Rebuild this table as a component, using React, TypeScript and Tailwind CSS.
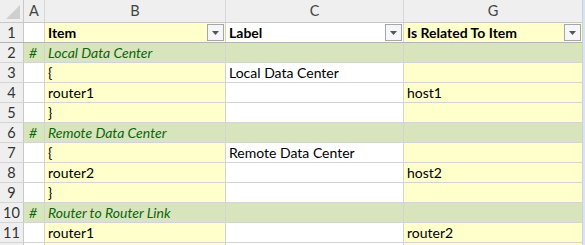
import React from 'react';

type Kind = 'group' | 'data';

type Row = {
  n: number | null;
  kind: Kind;
  a?: string;
  b?: string;
  c?: string;
  g?: string;
};

const rows: Row[] = [
  { n: 2, kind: 'group', a: '#', b: 'Local Data Center' },
  { n: 3, kind: 'data', b: '{', c: 'Local Data Center' },
  { n: 4, kind: 'data', b: 'router1', g: 'host1' },
  { n: 5, kind: 'data', b: '}' },
  { n: 6, kind: 'group', a: '#', b: 'Remote Data Center' },
  { n: 7, kind: 'data', b: '{', c: 'Remote Data Center' },
  { n: 8, kind: 'data', b: 'router2', g: 'host2' },
  { n: 9, kind: 'data', b: '}' },
  { n: 10, kind: 'group', a: '#', b: 'Router to Router Link' },
  { n: 11, kind: 'data', b: 'router1', g: 'router2' },
  // row 12 only peeks in at the bottom edge
  { n: null, kind: 'data' },
];

const FilterButton = () => (
  <div className="absolute right-[1px] top-[1px] w-[17px] h-[17px] border border-[#a6a6a6] bg-[#f4f6f9] flex items-center justify-center">
    <svg width="7" height="4" viewBox="0 0 7 4">
      <path d="M0 0 L7 0 L3.5 4 Z" fill="#555" />
    </svg>
  </div>
);

const App: React.FC = () => {
  return (
    <div
      className="w-[585px] h-[245px] overflow-hidden bg-white flex text-[14px] text-black"
      style={{ fontFamily: 'Lato, "Liberation Sans", sans-serif' }}
    >
      <div className="w-[582px] flex flex-col shrink-0">
        {/* column letters */}
        <div className="flex h-[23px] shrink-0 bg-[#efefef] text-[#444] text-[14.5px] border-b border-[#c8c8c8]">
          <div className="w-[24px] border-r border-[#c8c8c8] relative">
            <svg className="absolute right-[3px] bottom-[3px]" width="14" height="14" viewBox="0 0 14 14">
              <path d="M14 0 L14 14 L0 14 Z" fill="#cfcfcf" />
            </svg>
          </div>
          <div className="w-[21px] border-r border-[#d8d8d8] flex items-center justify-center">A</div>
          <div className="w-[181px] border-r border-[#d8d8d8] flex items-center justify-center">B</div>
          <div className="w-[178px] border-r border-[#d8d8d8] flex items-center justify-center">C</div>
          <div className="flex-1 flex items-center justify-center">G</div>
        </div>

        {/* table header row */}
        <div className="flex h-[20px] shrink-0 border-b border-[#b4b4b4]">
          <div className="w-[24px] bg-[#efefef] border-r border-[#c8c8c8] text-[#333] text-[14.5px] flex items-center justify-center">1</div>
          <div className="w-[21px] border-r border-[#d4d4d4] bg-white" />
          <div className="w-[181px] border-r border-[#d4d4d4] bg-[#ffffcc] relative pl-[3px] font-bold leading-[20px]">
            Item
            <FilterButton />
          </div>
          <div className="w-[178px] border-r border-[#d4d4d4] bg-white relative pl-[3px] font-bold leading-[20px]">
            Label
            <FilterButton />
          </div>
          <div className="flex-1 bg-[#ffffcc] relative pl-[3px] font-bold leading-[20px]">
            Is Related To Item
            <FilterButton />
          </div>
        </div>

        {rows.map((r, i) => {
          const group = r.kind === 'group';
          return (
            <div key={i} className="flex h-[20px] shrink-0 border-b border-[#d4d4d4]">
              <div className="w-[24px] bg-[#efefef] border-r border-[#c8c8c8] text-[#333] text-[14.5px] flex items-center justify-center">
                {r.n}
              </div>
              <div
                className={`w-[21px] border-r border-[#d4d4d4] pl-[5px] leading-[20px] ${
                  group ? 'bg-[#d8e4bc] text-[#0f650f] italic' : 'bg-white'
                }`}
              >
                {r.a}
              </div>
              <div
                className={`w-[181px] border-r border-[#d4d4d4] pl-[3px] leading-[20px] whitespace-nowrap ${
                  group ? 'bg-[#d8e4bc] text-[#0f650f] italic' : 'bg-[#ffffcc]'
                }`}
              >
                {r.b}
              </div>
              <div
                className={`w-[178px] border-r border-[#d4d4d4] pl-[3px] leading-[20px] whitespace-nowrap ${
                  group ? 'bg-[#d8e4bc]' : 'bg-white'
                }`}
              >
                {r.c}
              </div>
              <div
                className={`flex-1 pl-[3px] leading-[20px] whitespace-nowrap ${
                  group ? 'bg-[#d8e4bc]' : 'bg-[#ffffcc]'
                }`}
              >
                {r.g}
              </div>
            </div>
          );
        })}
      </div>
      <div className="flex-1 bg-[#dbe3ef] border-l border-[#c8d2e0]" />
    </div>
  );
};

export default App;
